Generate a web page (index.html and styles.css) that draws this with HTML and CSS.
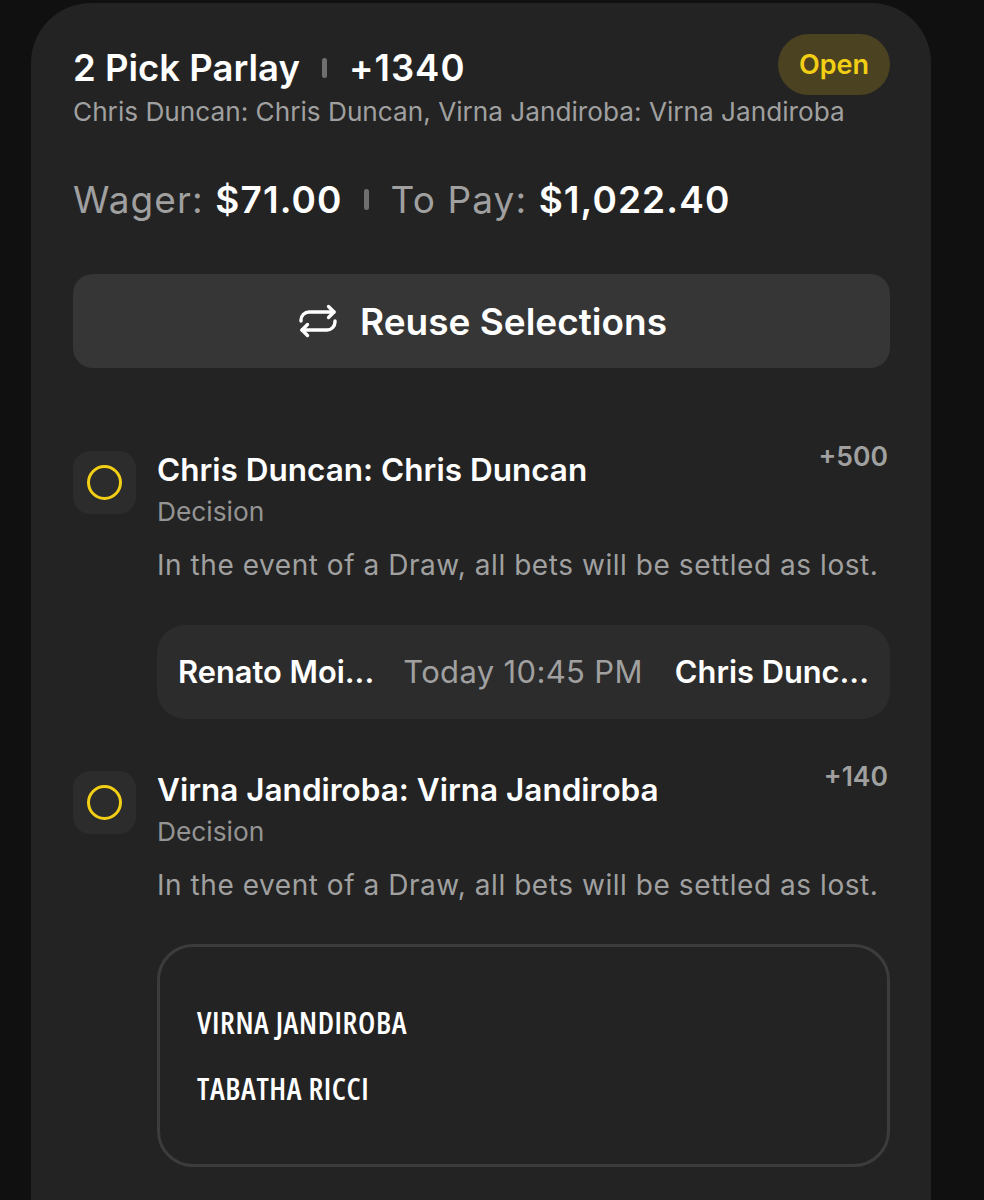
FILE: index.html
```html
<!DOCTYPE html>
<html lang="en">
<head>
    <meta charset="UTF-8">
    <meta name="viewport" content="width=device-width, initial-scale=1.0">
    <title>2 Pick Parlay</title>
    <link rel="stylesheet" href="styles.css">
</head>
<body>
    <div class="card">
        <div class="head">
            <div class="head-text">
                <div class="title">
                    <span>2 Pick Parlay</span>
                    <i class="sep"></i>
                    <span>+1340</span>
                </div>
                <div class="subtitle">Chris Duncan: Chris Duncan, Virna Jandiroba: Virna Jandiroba</div>
            </div>
            <span class="badge">Open</span>
        </div>

        <div class="wager">
            <span>Wager: <b>$71.00</b></span>
            <i class="sep sep-wager"></i>
            <span>To Pay: <b>$1,022.40</b></span>
        </div>

        <button class="reuse">
            <svg width="38" height="34" viewBox="0 0 38 34" fill="none" stroke="#fff" stroke-width="3.4" stroke-linecap="round" stroke-linejoin="round">
                <path d="M2 17v-1a8 8 0 0 1 8-8h25"/>
                <path d="M29.500 2.500l5.500 5.500-5.500 5.500"/>
                <path d="M36 17v1a8 8 0 0 1-8 8H3"/>
                <path d="M8.500 20.500l-5.500 5.500 5.500 5.500"/>
            </svg>
            Reuse Selections
        </button>

        <div class="leg leg-first">
            <div class="tile"><i class="ring"></i></div>
            <div class="leg-body">
                <div class="leg-top">
                    <div class="leg-name">Chris Duncan: Chris Duncan</div>
                    <div class="odds">+500</div>
                </div>
                <div class="market">Decision</div>
                <div class="note">In the event of a Draw, all bets will be settled as lost.</div>
                <div class="match">
                    <span class="fighter">Renato Moi...</span>
                    <span class="time">Today 10:45 PM</span>
                    <span class="fighter">Chris Dunc...</span>
                </div>
            </div>
        </div>

        <div class="leg leg-second">
            <div class="tile"><i class="ring"></i></div>
            <div class="leg-body">
                <div class="leg-top">
                    <div class="leg-name">Virna Jandiroba: Virna Jandiroba</div>
                    <div class="odds">+140</div>
                </div>
                <div class="market">Decision</div>
                <div class="note">In the event of a Draw, all bets will be settled as lost.</div>
                <div class="bout">
                    <div>VIRNA JANDIROBA</div>
                    <div>TABATHA RICCI</div>
                </div>
            </div>
        </div>
    </div>
</body>
</html>
```

FILE: styles.css
```css
html, body {
    margin: 0;
    height: 1200px;
    overflow: hidden;
    background-color: #101010;
}
body {
    padding: 3px 0 0 31px;
    box-sizing: border-box;
    font-family: "Inter", "Liberation Sans", sans-serif;
    color: #fff;
}
.card {
    width: 900px;
    height: 1197px;
    box-sizing: border-box;
    padding: 31px 41px 0 42px;
    background-color: #232323;
    border-radius: 60px 60px 0 0;
}
.head {
    display: flex;
    justify-content: space-between;
    align-items: flex-start;
}
.head-text {
    flex: none;
    width: 0;
    white-space: nowrap;
}
.title {
    display: flex;
    align-items: center;
    gap: 22px;
    height: 68px;
    font-size: 36.500px;
    font-weight: 600;
}
.title span:last-child {
    letter-spacing: 1px;
}
.sep {
    flex: none;
    width: 5px;
    height: 20px;
    border-radius: 3px;
    background-color: #6f6f6f;
}
.subtitle {
    margin-top: -8px;
    font-size: 26.200px;
    line-height: 36px;
    color: #a0a0a0;
}
.badge {
    width: 112px;
    height: 61px;
    line-height: 62px;
    text-align: center;
    font-size: 27px;
    font-weight: 600;
    color: #f2cf15;
    background-color: #4a4220;
    border-radius: 31px;
}
.wager {
    display: flex;
    align-items: center;
    gap: 21px;
    margin-top: 46px;
    height: 46px;
    font-size: 37px;
    letter-spacing: 1.100px;
    color: #a0a0a0;
}
.wager b {
    font-weight: 600;
    color: #fff;
}
.sep-wager {
    height: 21px;
    margin-right: 1px;
}
.reuse {
    display: flex;
    align-items: center;
    justify-content: center;
    gap: 23px;
    width: 100%;
    height: 94px;
    margin-top: 52px;
    padding: 0 0 0 3px;
    border: none;
    border-radius: 20px;
    background-color: #363636;
    color: #fff;
    font-family: inherit;
    font-size: 37px;
    font-weight: 600;
}
.leg {
    display: flex;
    align-items: flex-start;
    gap: 21px;
}
.leg-first {
    margin-top: 70px;
}
.leg-second {
    margin-top: 39px;
}
.tile {
    flex: none;
    display: flex;
    align-items: center;
    justify-content: center;
    width: 63px;
    height: 63px;
    margin-top: 13px;
    border-radius: 17px;
    background-color: #2c2c2c;
}
.ring {
    width: 29px;
    height: 29px;
    border: 3px solid #f2cf15;
    border-radius: 50%;
}
.leg-body {
    flex: 1;
    min-width: 0;
}
.leg-top {
    display: flex;
    justify-content: space-between;
    align-items: flex-start;
    height: 44px;
}
.leg-name {
    margin-top: 13px;
    font-size: 31.500px;
    line-height: 38px;
    font-weight: 600;
}
.odds {
    margin-right: 2px;
    font-size: 26.500px;
    line-height: 36px;
    font-weight: 600;
    color: #a0a0a0;
}
.market {
    margin-top: 12px;
    font-size: 26.300px;
    line-height: 36px;
    color: #949494;
}
.note {
    margin-top: 17px;
    font-size: 28px;
    line-height: 36px;
    letter-spacing: 0.550px;
    color: #a0a0a0;
    white-space: nowrap;
}
.match {
    display: flex;
    align-items: center;
    justify-content: space-between;
    box-sizing: border-box;
    height: 94px;
    margin-top: 42px;
    padding: 0 21px 2px;
    border-radius: 28px;
    background-color: #2c2c2c;
    font-size: 31px;
}
.fighter {
    font-size: 30.800px;
    font-weight: 600;
}
.time {
    margin-right: 3px;
    letter-spacing: 0.350px;
    color: #a0a0a0;
}
.bout {
    box-sizing: border-box;
    height: 223px;
    margin-top: 41px;
    padding: 55px 0 0 37px;
    border: 3px solid #3c3c3c;
    border-radius: 36px;
    font-family: "Open Sans", "Liberation Sans", sans-serif;
    font-stretch: 75%;
    font-size: 30.500px;
    letter-spacing: 0.600px;
    line-height: 40px;
    font-weight: 600;
}
.bout div + div {
    margin-top: 26px;
}
```
